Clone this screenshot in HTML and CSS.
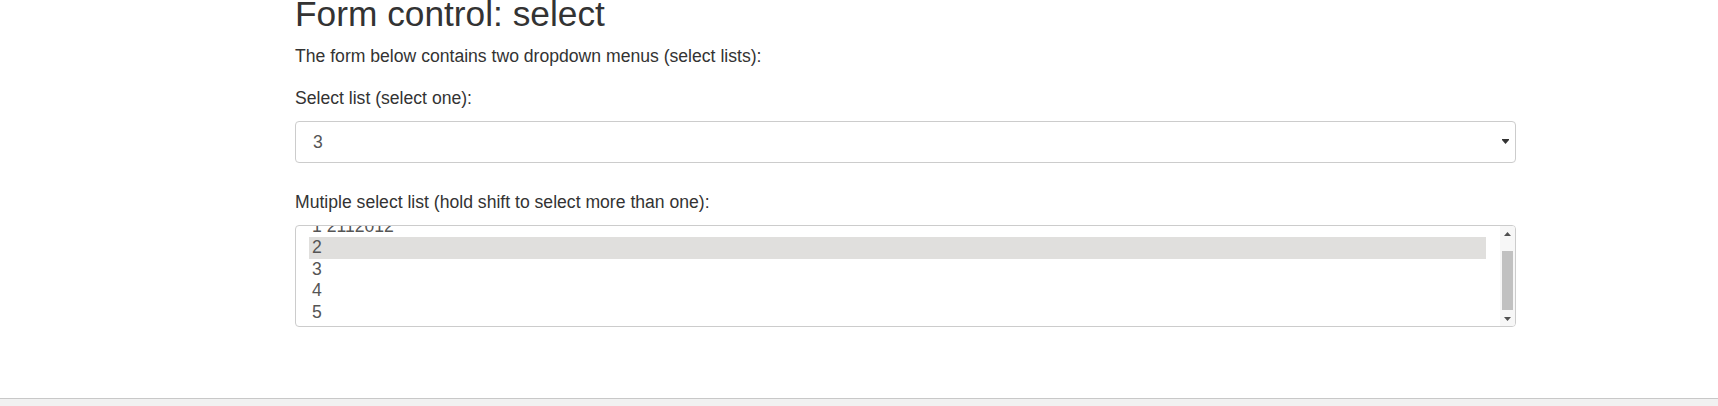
FILE: index.html
```html
<!DOCTYPE html>
<html lang="en">
<head>
<meta charset="utf-8">
<title>Form control: select</title>
<link rel="stylesheet" href="styles.css">
</head>
<body>
<main class="page">
  <div class="content">
    <h1 class="title">Form control: select</h1>
    <p class="intro">The form below contains two dropdown menus (select lists):</p>
    <form class="form">
      <div class="form-group">
        <label class="label" for="sel1">Select list (select one):</label>
        <div class="select-wrap">
          <select class="form-control single" id="sel1">
            <option>1</option>
            <option>2</option>
            <option selected>3</option>
            <option>4</option>
          </select>
          <svg class="caret" width="7" height="5" viewBox="0 0 7 5" aria-hidden="true"><path d="M0 0H7V1L3.5 5L0 1Z" fill="#333"/></svg>
        </div>
      </div>
      <div class="form-group last">
        <label class="label" id="sel2-label">Mutiple select list (hold shift to select more than one):</label>
        <div class="form-control multi" role="listbox" aria-multiselectable="true" aria-labelledby="sel2-label">
          <div class="multi-list">
            <div class="opt first" role="option">1 2112012</div>
            <div class="opt selected" role="option" aria-selected="true">2</div>
            <div class="opt" role="option">3</div>
            <div class="opt" role="option">4</div>
            <div class="opt" role="option">5</div>
          </div>
          <div class="scrollbar">
            <div class="sb-btn"><svg width="7" height="4" viewBox="0 0 7 4"><path d="M3.5 0L7 4H0Z" fill="#505050"/></svg></div>
            <div class="sb-track"><div class="sb-thumb"></div></div>
            <div class="sb-btn"><svg width="7" height="4" viewBox="0 0 7 4"><path d="M0 0H7L3.5 4Z" fill="#505050"/></svg></div>
          </div>
        </div>
      </div>
    </form>
  </div>
</main>
<footer class="footer"></footer>
</body>
</html>
```

FILE: styles.css
```css
html, body {
  margin: 0;
  padding: 0;
  background: #fff;
}
body {
  font-family: "Liberation Sans", Arial, Helvetica, sans-serif;
  font-size: 17.6px;
  line-height: 26px;
  color: #333;
  overflow: hidden;
}
.page {
  padding-left: 295px;
}
.content {
  width: 1221px;
}
.title {
  font-size: 35.3px;
  font-weight: 400;
  line-height: 40px;
  margin: -6px 0 9px;
  color: #333;
}
.intro {
  margin: 0 0 16px;
}
.form-group {
  margin-bottom: 26px;
}
.form-group.last {
  margin-bottom: 0;
}
.label {
  display: block;
  margin-bottom: 10px;
  font-weight: 400;
}
.form-control {
  display: block;
  width: 100%;
  box-sizing: border-box;
  font-family: "Liberation Sans", Arial, Helvetica, sans-serif;
  font-size: 17.6px;
  color: #555;
  background: #fff;
  border: 1px solid #ccc;
  border-radius: 4px;
}
.select-wrap {
  position: relative;
}
.single {
  -webkit-appearance: none;
  appearance: none;
  height: 42px;
  padding: 0 30px 0 17px;
  outline: none;
}
.caret {
  position: absolute;
  right: 7px;
  top: 18px;
}
.multi {
  height: 102px;
  display: flex;
  overflow: hidden;
  line-height: 21.5px;
}
.multi-list {
  flex: 1;
  min-width: 0;
  overflow: hidden;
  padding: 0 14px 0 13px;
}
.opt {
  height: 21.5px;
  padding-left: 3px;
  white-space: nowrap;
}
.opt.first {
  margin-top: -10.5px;
}
.opt.selected {
  background: #e0dfdd;
}
.scrollbar {
  width: 15px;
  flex: none;
  display: flex;
  flex-direction: column;
  background: #f7f7f7;
}
.sb-btn {
  height: 15px;
  display: flex;
  align-items: center;
  justify-content: center;
}
.sb-track {
  flex: 1;
  padding-top: 10px;
}
.sb-thumb {
  height: 59px;
  margin: 0 2px;
  background: #c1c1c1;
}
.footer {
  margin-top: 71px;
  height: 40px;
  border-top: 1px solid #c8c8c8;
  background: #f1f1f1;
}
```
